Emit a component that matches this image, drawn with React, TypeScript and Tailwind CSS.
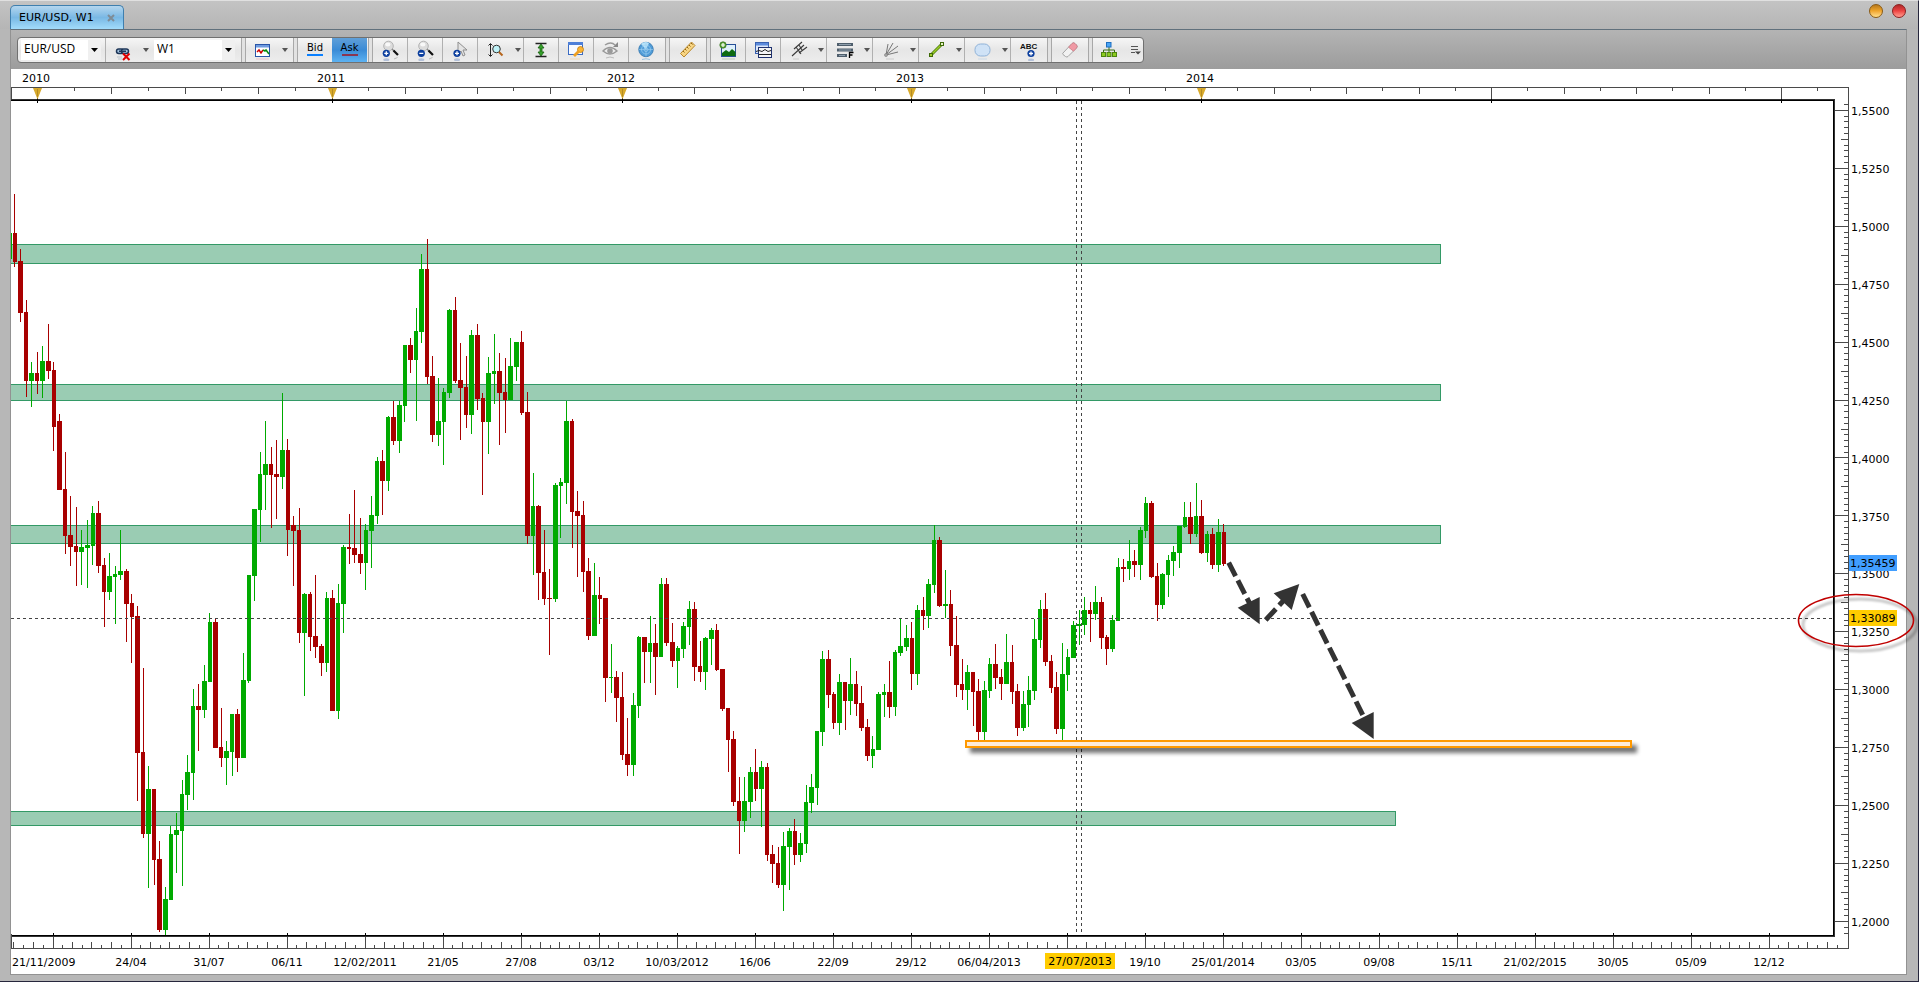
import type { ReactNode } from "react"

// one candle per week: colour, high, body top, body bottom, low
const candleRows = `
r 194 233 262 267,r 249 261 313 322,r 300 312 381 397,g 362 373 381 407,r 352 373 381 394,g 346 361 381 398,r 324 361 371 379,
r 362 370 427 451,r 414 421 490 490,r 452 489 536 554,r 496 535 547 566,r 507 546 552 586,g 530 547 552 585,g 520 545 548 588,
g 506 513 546 565,r 501 513 566 573,r 558 565 592 627,g 553 576 592 600,g 566 574 577 624,g 530 571 575 580,r 569 571 604 642,
r 594 603 617 663,r 606 616 753 801,r 668 752 834 838,g 766 789 834 888,r 789 789 860 885,r 841 859 930 932,g 887 899 930 935,
g 826 834 900 900,g 813 830 835 873,g 780 794 831 886,g 755 772 795 810,g 689 706 773 800,r 684 706 710 751,g 665 681 710 718,
g 613 622 682 682,r 619 622 748 748,r 708 747 758 767,g 741 751 758 785,g 714 714 752 776,r 709 714 758 772,g 653 680 758 758,
g 575 575 681 683,g 509 509 576 601,g 452 474 510 542,g 421 464 475 510,r 447 464 475 528,r 440 474 477 519,g 393 450 477 489,
r 439 450 530 556,r 516 525 531 586,r 508 530 633 643,g 593 594 633 696,r 592 594 637 651,r 575 636 647 658,r 644 646 663 676,
g 592 598 663 672,r 590 598 711 711,g 584 603 711 719,g 545 547 604 633,r 514 547 549 564,r 490 548 555 563,r 518 554 563 574,
g 524 530 563 590,g 496 515 531 568,g 457 461 516 524,r 450 461 481 515,g 416 417 481 491,r 401 417 441 445,g 401 405 441 453,
g 345 345 406 422,r 338 345 360 373,g 308 331 360 421,g 254 269 332 343,r 239 269 377 384,r 356 376 435 442,g 378 421 435 446,
g 388 392 422 465,g 309 310 393 398,r 297 310 381 383,r 343 380 388 440,r 356 387 415 428,g 330 335 415 434,r 324 335 399 410,
r 393 398 422 495,g 357 373 422 454,g 334 371 374 404,r 353 371 393 445,r 358 392 400 433,g 338 366 400 400,g 342 342 367 381,
r 331 342 413 415,r 392 412 536 544,g 473 506 536 575,r 505 506 573 600,r 530 572 599 605,r 569 598 599 655,g 483 485 599 602,
g 478 482 486 538,g 401 421 483 504,r 419 421 512 548,r 491 511 516 577,r 501 515 572 592,r 558 571 636 640,g 563 595 636 636,
r 577 595 599 624,r 598 598 678 702,g 644 677 678 693,r 671 677 698 722,r 672 697 755 760,r 718 754 765 776,g 693 705 765 776,
g 636 637 706 718,r 637 637 652 683,g 616 643 652 683,r 624 643 657 695,g 578 584 657 657,r 578 584 643 646,r 623 642 661 667,
g 646 648 661 688,g 622 626 649 658,g 601 609 627 645,r 602 609 667 681,r 641 666 672 682,g 637 638 672 690,g 628 630 639 665,
r 624 630 670 671,r 669 669 709 711,r 708 708 740 772,r 731 739 802 806,r 777 801 821 854,g 777 801 821 832,g 767 772 802 818,
r 749 772 789 801,g 761 767 789 827,r 763 767 855 861,r 845 854 864 883,r 847 863 885 888,g 832 846 885 911,g 828 831 847 890,
r 819 831 855 865,g 833 843 855 862,g 785 802 844 853,g 774 787 803 813,g 731 731 788 805,g 651 659 732 746,r 650 659 695 708,
r 692 694 723 729,g 674 682 723 735,r 682 682 701 730,g 658 684 701 715,r 671 684 704 716,r 686 703 728 731,r 719 727 756 761,
g 736 749 756 768,g 692 694 750 750,g 684 692 695 717,r 661 692 707 718,g 650 652 707 716,g 619 646 653 656,g 625 638 647 651,
r 622 638 674 690,g 605 610 674 685,r 597 610 616 630,g 579 584 616 628,g 525 540 585 593,r 537 540 606 607,g 570 604 606 618,
r 590 604 646 656,r 616 645 685 697,r 659 684 690 700,g 665 672 690 710,r 672 672 692 726,r 679 691 732 740,g 681 690 732 740,
g 658 664 691 698,r 644 664 678 689,r 669 677 684 700,g 634 662 684 684,r 645 662 692 704,r 684 691 728 736,g 691 704 728 731,
g 676 690 705 727,g 619 639 691 700,g 600 609 640 648,r 593 609 662 666,r 655 661 688 693,r 672 687 729 734,g 643 674 729 740,
g 649 657 675 691,g 621 625 658 658,g 610 624 626 645,g 597 610 625 635,r 602 610 614 642,g 586 602 614 620,r 597 602 638 649,
r 635 637 649 665,g 615 620 649 652,g 558 567 621 621,r 559 567 569 582,g 540 561 569 580,r 550 561 565 577,g 527 530 565 580,
g 497 503 531 538,r 501 503 577 578,r 563 576 605 621,g 573 574 605 609,g 555 560 575 597,g 546 552 561 576,g 526 526 553 568,
g 502 517 527 528,r 502 517 534 544,g 483 516 534 537,r 500 516 553 554,g 531 534 553 562,r 528 534 565 569,g 519 532 565 572,
r 524 532 564 566`

const candles = candleRows.trim().split(/,\s*/).map((row) => {
    const [color, ...y] = row.split(" ")
    return { fill: color === "g" ? "#00aa00" : "#a80000", y: y.map(Number) }
})

const weekStep = 78 / 14
const bodyLeft = (i: number) => Math.floor(13.01 + i * weekStep)

const zones = [
    { y: 244, h: 20, right: 1441 },
    { y: 384, h: 17, right: 1441 },
    { y: 525, h: 19, right: 1441 },
    { y: 811, h: 15, right: 1396 },
]

const years = [
    { x: 37, label: "2010" },
    { x: 332, label: "2011" },
    { x: 622, label: "2012" },
    { x: 911, label: "2013" },
    { x: 1201, label: "2014" },
    { x: 1491, label: "" },
    { x: 1781, label: "" },
]

const dates = ["", "24/04", "31/07", "06/11", "12/02/2011", "21/05", "27/08", "03/12", "10/03/2012", "16/06", "22/09", "29/12",
    "06/04/2013", "", "19/10", "25/01/2014", "03/05", "09/08", "15/11", "21/02/2015", "30/05", "05/09", "12/12"]

function Candles() {
    return (
        <g>
            <rect x={11} y={233} width={1} height={26} fill="#00aa00" />
            {candles.map(({ fill, y }, i) => (
                <g key={i} fill={fill}>
                    <rect x={Math.floor(14.9 + i * weekStep)} y={y[0]} width={1} height={y[3] - y[0]} />
                    <rect x={bodyLeft(i)} y={y[1]} width={bodyLeft(i + 1) - bodyLeft(i) - 1} height={y[2] - y[1]} />
                </g>
            ))}
        </g>
    )
}

function YearAxis() {
    const ticks: ReactNode[] = []
    years.forEach(({ x }, i) => {
        const next = years[i + 1] ? years[i + 1].x : x + 290
        for (let k = 1; k < 8; k++) {
            const tx = Math.round(x + ((next - x) * k) / 8)
            if (tx < 1848) ticks.push(<rect key={tx} x={tx} y={88} width={1} height={k % 2 ? 3 : 6} />)
        }
    })
    return (
        <g fill="#4a4a4a">
            <rect x={11} y={87} width={1838} height={1} />
            <rect x={11} y={87} width={1} height={12} />
            {ticks}
            {years.map(({ x, label }) => (
                <g key={x}>
                    <rect x={x} y={88} width={1} height={11} fill={label ? "#8d6f20" : "#4a4a4a"} />
                    {label && <path d={`M${x - 4} 88h9l-4 10h-1z`} fill="#d8aa2c" shapeRendering="auto" />}
                    {label && <rect x={x} y={89} width={1} height={8} fill="#b58c22" />}
                    <rect x={x} y={99} width={1} height={4} fill="#000" />
                    <text x={x - 1} y={82} textAnchor="middle" fill="#000">{label}</text>
                </g>
            ))}
        </g>
    )
}

function DateAxis() {
    const ticks: ReactNode[] = []
    for (let k = -4; k < 184; k++) {
        const x = Math.floor(52.9 + 9.75 * k)
        const h = k % 2 ? 3 : 6
        if (k % 8 && x < 1840) ticks.push(<rect key={k} x={x} y={948 - h} width={1} height={h} />)
    }
    return (
        <g fill="#4a4a4a">
            <rect x={11} y={948} width={1838} height={1} />
            <rect x={11} y={934} width={1} height={14} />
            {ticks}
            {dates.map((label, i) => (
                <g key={i}>
                    <rect x={53 + 78 * i} y={937} width={1} height={11} />
                    <rect x={53 + 78 * i} y={933} width={1} height={3} fill="#000" />
                    <text x={53 + 78 * i} y={966} textAnchor="middle" fill="#000">{label}</text>
                </g>
            ))}
            <text x={12} y={966} fill="#000">21/11/2009</text>
            <rect x={1045} y={953} width={70} height={16} fill="#ffcc00" />
            <text x={1080} y={965} textAnchor="middle" fill="#000">27/07/2013</text>
        </g>
    )
}

function PriceAxis() {
    const ticks: ReactNode[] = []
    for (let k = -1; k <= 142; k++) {
        const y = Math.floor(110.4 + 5.793 * k)
        const w = k % 10 === 0 ? 13 : k % 5 === 0 ? 7 : 4
        ticks.push(<rect key={k} x={1848 - w} y={y} width={w} height={1} />)
    }
    return (
        <g fill="#4a4a4a">
            <rect x={1848} y={87} width={1} height={862} />
            {ticks}
            {Array.from({ length: 15 }, (_, i) => (
                <text key={i} x={1851} y={Math.round(115 + 57.93 * i)} fill="#000">
                    {(1.55 - i * 0.025).toFixed(4).replace(".", ",")}
                </text>
            ))}
            <rect x={1849} y={555} width={48} height={16} fill="#419eff" />
            <text x={1850} y={567} fill="#000">1,35459</text>
            <rect x={1849} y={610} width={48} height={16} fill="#ffcc00" />
            <text x={1850} y={622} fill="#000">1,33089</text>
        </g>
    )
}

function Forecast() {
    return (
        <g shapeRendering="auto">
            <g stroke="#333" strokeWidth={5} strokeDasharray="15 5">
                <path d="M1228.7 562.7L1250 604M1265.7 620L1285 599M1302.7 594L1363 715.5" fill="none" />
            </g>
            <g fill="#333">
                <path d="M1259.7 624.3V597L1237.7 607.7z" />
                <path d="M1299.3 584L1273.7 593.3L1291.7 610z" />
                <path d="M1373.7 739V712L1351.7 723z" />
            </g>
        </g>
    )
}

function Chart() {
    return (
        <svg
            viewBox="11 69 1895 905"
            className="relative block w-full h-auto overflow-visible bg-white text-[11px] font-['DejaVu_Sans',Verdana,sans-serif]"
            shapeRendering="crispEdges"
            role="img"
            aria-label="EUR/USD weekly chart"
        >
            <defs>
                <filter id="soft" x="-5%" y="-150%" width="110%" height="500%">
                    <feGaussianBlur stdDeviation="2" />
                </filter>
                <filter id="ring" x="-10%" y="-20%" width="120%" height="140%">
                    <feGaussianBlur stdDeviation="1.2" />
                </filter>
            </defs>
            {zones.map((z) => (
                <g key={z.y}>
                    <rect x={11} y={z.y} width={z.right - 11} height={z.h} fill="#339966" />
                    <rect x={11} y={z.y + 1} width={z.right - 12} height={z.h - 2} fill="#9accb3" />
                </g>
            ))}
            <Candles />
            <g stroke="#444" strokeDasharray="3 3">
                <path d="M11 618.5H1833M1076.5 101V935M1081.5 101V935" />
            </g>
            <rect x={970} y={745} width={667} height={8} fill="#000" opacity={0.55} filter="url(#soft)" />
            <rect x={965} y={740} width={667} height={8} fill="#ff9900" />
            <rect x={967} y={742} width={663} height={4} fill="#fdebd9" />
            <Forecast />
            <path d="M11 99.5H1835M11 936.5H1835M1834.5 99V937" stroke="#333" fill="none" />
            <path d="M11 100.5H1834M11 935.5H1834M1833.5 100V936" stroke="#000" fill="none" />
            <YearAxis />
            <DateAxis />
            <PriceAxis />
            <g fill="none" shapeRendering="auto">
                <ellipse cx={1860} cy={625} rx={57} ry={26} stroke="#000" strokeWidth={3} opacity={0.22} filter="url(#ring)" />
                <ellipse cx={1856} cy={620.5} rx={57.5} ry={26} stroke="#c00000" strokeWidth={1.6} />
            </g>
        </svg>
    )
}

function Icon({ children }: { children: ReactNode }) {
    return <svg viewBox="0 0 20 23" className="w-5 h-[23px] shrink-0" fill="none" aria-hidden="true">{children}</svg>
}

function Badge({ x, y, minus }: { x: number; y: number; minus?: boolean }) {
    return (
        <g>
            <ellipse cx={x} cy={y + 6.5} rx={3} ry={1.5} fill="#0c3f9e" opacity={0.25} />
            <circle cx={x} cy={y} r={3.6} fill="#0c3f9e" />
            <path d={minus ? `M${x - 2} ${y}h4` : `M${x - 2} ${y}h4M${x} ${y - 2}v4`} stroke="#fff" strokeWidth={1.3} />
        </g>
    )
}

function Magnifier({ minus }: { minus?: boolean }) {
    return (
        <Icon>
            <circle cx={8.5} cy={8} r={4.8} fill="#dcdcdc" stroke="#b4b4b4" />
            <ellipse cx={7.8} cy={6.4} rx={2.6} ry={2} fill="#f8f8f8" />
            <path d="M12 11l2 2" stroke="#888" strokeWidth={1.4} />
            <path d="M13.5 12.5l4.5 4.5" stroke="#111" strokeWidth={2.2} />
            <path d="M14 21l3.5-1.5" stroke="#999" opacity={0.6} />
            <Badge x={6.3} y={15.3} minus={minus} />
        </Icon>
    )
}

function DropArrow() {
    return (
        <svg viewBox="0 0 6 4" className="w-[6px] h-1 shrink-0" aria-hidden="true">
            <path d="M0 0h6L3 4z" fill="#555" />
        </svg>
    )
}

function ToolButton({ label, wide, last, children }: { label: string; wide?: boolean; last?: boolean; children: ReactNode }) {
    const width = wide ? "w-[46px] gap-2 pl-[6px]" : last ? "w-9" : "w-[35px]"
    return (
        <button
            type="button"
            aria-label={label}
            className={`${width} ${last ? "" : "border-r border-[#b0b0b0]"} h-full shrink-0 flex items-center justify-center`}
        >
            {children}
            {wide && <DropArrow />}
        </button>
    )
}

function Divider() {
    return <div className="w-[5px] h-full shrink-0 border-x border-[#a8a8a8] bg-[#e2e2e2]" />
}

function Combo({ label, value, width }: { label: string; value: string; width: string }) {
    return (
        <div className={`${width} relative h-5 shrink-0 bg-white flex items-center`}>
            <select
                aria-label={label}
                defaultValue={value}
                className="appearance-none w-full h-5 pl-[3px] pb-[2px] bg-transparent text-xs leading-4 text-black font-['Open_Sans',Tahoma,sans-serif] outline-none"
            >
                <option>{value}</option>
            </select>
            <span className="absolute right-0 top-0 h-5 w-[13px] bg-[#f0f0f0] flex items-center justify-center pointer-events-none">
                <svg viewBox="0 0 7 4" className="w-[7px] h-1" aria-hidden="true"><path d="M0 0h7L3.5 4z" fill="#000" /></svg>
            </span>
        </div>
    )
}

function Toolbar() {
    return (
        <div className="h-[39px] px-[6px] flex items-center bg-linear-to-b from-[#b4b4b4] to-[#9c9c9c]">
            <div className="h-[26px] flex items-center rounded-[4px] border border-[#707070] bg-linear-to-b from-[#f6f6f6] via-[#e6e6e6] to-[#ededed] overflow-hidden">
                <div className="h-full w-[88px] shrink-0 pl-[3px] border-r border-[#b0b0b0] flex items-center">
                    <Combo label="Instrument" value="EUR/USD" width="w-[80px]" />
                </div>
                <button type="button" aria-label="Unlink" className="w-12 h-full shrink-0 flex items-center gap-[10px] pl-[7px]">
                    <Icon>
                        <g stroke="#1d3557" strokeWidth={1.5}>
                            <rect x={3.5} y={11} width={7} height={4.5} rx={2.2} fill="#9fc0dd" />
                            <rect x={8.5} y={11} width={7} height={4.5} rx={2.2} fill="#9fc0dd" />
                            <path d="M6 13.3h7" />
                        </g>
                        <path d="M4 19h5M5 21h4" stroke="#8fa0b0" opacity={0.5} />
                        <path d="M10 15.500l6.500 6.500M16.500 15.500l-6.500 6.500" stroke="#e00000" strokeWidth={2} />
                    </Icon>
                    <DropArrow />
                </button>
                <div className="h-full w-[87px] shrink-0 flex items-center">
                    <Combo label="Period" value="W1" width="w-[81px]" />
                </div>
                <Divider />
                <button type="button" aria-label="Chart type" className="w-[47px] h-full shrink-0 flex items-center gap-[10px] pl-[6px]">
                    <Icon>
                        <rect x={3.5} y={6.5} width={14} height={12} fill="#fff" stroke="#2a56a8" />
                        <rect x={4} y={7} width={13} height={2.5} fill="#6f9be0" />
                        <path d="M5 14l2-2 2 3 2-3" stroke="#d00000" strokeWidth={1.5} />
                        <path d="M11 12l2 1 1-1 3 4" stroke="#0a8a0a" strokeWidth={1.5} />
                        <path d="M4 21h13" stroke="#e9a9b5" opacity={0.6} />
                    </Icon>
                    <DropArrow />
                </button>
                <Divider />
                <button type="button" className="w-[34px] h-full shrink-0 flex flex-col items-center pt-[3px] text-[10px] leading-[13px] text-black font-['DejaVu_Sans',Verdana,sans-serif]">
                    Bid
                    <span className="w-4 h-[2px] bg-[#0a80ff]" />
                </button>
                <button type="button" aria-pressed="true" className="w-[35px] mr-px h-full shrink-0 flex flex-col items-center pt-[3px] text-[10px] leading-[13px] text-black font-['DejaVu_Sans',Verdana,sans-serif] bg-linear-to-b from-[#5f9fd8] via-[#3a8bd6] to-[#5cb2f2]">
                    Ask
                    <span className="w-4 h-[2px] bg-[#8a3550]" />
                </button>
                <Divider />
                <ToolButton label="Zoom in"><Magnifier /></ToolButton>
                <ToolButton label="Zoom out"><Magnifier minus /></ToolButton>
                <ToolButton label="Cursor">
                    <Icon>
                        <path d="M8 4v12l3-3 2 5 2-1-2-5h4z" fill="#e4e4e4" stroke="#8e8e8e" />
                        <Badge x={7} y={15.3} />
                    </Icon>
                </ToolButton>
                <ToolButton label="Vertical zoom" wide>
                    <Icon>
                        <path d="M3.5 6v12M1.5 7.5l2-2 2 2M1.5 16.5l2 2 2-2" stroke="#222" />
                        <circle cx={9.5} cy={11} r={3.8} fill="#bff2f7" stroke="#333" />
                        <path d="M12 14l3.5 3.5" stroke="#b5651d" strokeWidth={2} />
                    </Icon>
                </ToolButton>
                <ToolButton label="Fit height">
                    <Icon>
                        <path d="M4.500 5.500h11M4.500 18.500h11" stroke="#222" strokeWidth={1.3} />
                        <path d="M10 6l3 4h-2v4h2l-3 4-3-4h2v-4H7z" fill="#35a02a" stroke="#14610e" strokeWidth={0.8} />
                    </Icon>
                </ToolButton>
                <ToolButton label="Template">
                    <Icon>
                        <rect x={2.5} y={4.5} width={14} height={12} fill="#f7faff" stroke="#3a6bc4" />
                        <rect x={2} y={4} width={15} height={3} fill="#4d7fd8" />
                        <circle cx={14.5} cy={11.5} r={3} fill="#fbb533" stroke="#c07a10" strokeWidth={0.8} />
                        <path d="M13 13l-5 5" stroke="#f0a020" strokeWidth={2.8} />
                        <path d="M4 21h10" stroke="#f0c890" opacity={0.6} />
                    </Icon>
                </ToolButton>
                <ToolButton label="Visibility">
                    <Icon>
                        <path d="M2 13q7-7 14 0q-7 6-14 0z" stroke="#999" strokeWidth={1.4} fill="#ededed" />
                        <circle cx={9} cy={13} r={2.8} fill="#999" />
                        <path d="M4 7q6-4 10 0" stroke="#999" strokeWidth={1.5} />
                        <path d="M17 4v5h-5z" fill="#888" />
                        <path d="M5 20q4-2 8 0" stroke="#bbb" />
                    </Icon>
                </ToolButton>
                <ToolButton label="Scanner" last>
                    <Icon>
                        <circle cx={9} cy={11.5} r={7.2} fill="#4f9cd8" stroke="#3d7fb6" />
                        <path d="M9 11.5L4 6a7 7 0 0 1 8-1z" fill="#b5e2fa" />
                        <circle cx={9} cy={11.5} r={4.5} stroke="#9fd0f0" strokeWidth={0.7} />
                        <circle cx={9} cy={11.5} r={2} stroke="#9fd0f0" strokeWidth={0.7} />
                        <path d="M2 11.5h14M9 4.5v14" stroke="#9fd0f0" strokeWidth={0.6} />
                        <path d="M5 21.5q4-1.5 8 0" stroke="#9cc3e0" />
                    </Icon>
                </ToolButton>
                <Divider />
                <ToolButton label="Ruler" last>
                    <Icon>
                        <path d="M2.500 15.500L13.500 4l3.500 3.500L6 19z" fill="#f8d583" stroke="#b8862a" />
                        <path d="M5 13l1.500 1.500M7 11l1.500 1.500M9 9l1.500 1.500M11 7l1.500 1.500M13 5l1.500 1.500" stroke="#8e6518" />
                    </Icon>
                </ToolButton>
                <Divider />
                <ToolButton label="Add picture">
                    <Icon>
                        <rect x={3.5} y={6.5} width={14} height={12} fill="#dff0fb" stroke="#274f96" />
                        <path d="M4 18v-3l4-3 3 2 3-3 3.5 3V18z" fill="#0d6b12" />
                        <circle cx={5} cy={7} r={3.2} fill="#5ca53a" stroke="#2f6d17" strokeWidth={0.7} />
                        <path d="M3 7h4M5 5v4" stroke="#fff" strokeWidth={1.2} />
                        <path d="M4 21h13" stroke="#9cb89c" opacity={0.6} />
                    </Icon>
                </ToolButton>
                <ToolButton label="Indicators">
                    <Icon>
                        <rect x={2.5} y={4.5} width={13} height={11} fill="#dbe7fa" stroke="#3a62b0" />
                        <rect x={3} y={5} width={12} height={2.5} fill="#5c8bdc" />
                        <rect x={5.5} y={9.5} width={13} height={10} fill="#f5f5f5" stroke="#1f3270" />
                        <path d="M3 13.5l3-1 3 1 3-2 3 2 3-1M6 16.5h12" stroke="#222" />
                    </Icon>
                </ToolButton>
                <ToolButton label="Pitchfork" wide>
                    <Icon>
                        <path d="M2 18L14 7M6 9l5 7M4 11l8-7M9 15l8-6M9 7l3 5" stroke="#3a3a3a" strokeWidth={1.1} />
                        <path d="M3 21h6" stroke="#ccc" />
                    </Icon>
                </ToolButton>
                <ToolButton label="Fibonacci" wide>
                    <Icon>
                        <path d="M1 6.5h16M1 12h16M1 17.5h10" stroke="#4e5e6c" strokeWidth={3.2} />
                        <path d="M3 6.5h12M3 12h12M3 17.5h6" stroke="#8e9eac" />
                        <path d="M13.5 20v-5.500h4M13.500 17h3" stroke="#000" strokeWidth={1.3} />
                    </Icon>
                </ToolButton>
                <ToolButton label="Fan" wide>
                    <Icon>
                        <path d="M4 17L6 6M4 17L11 5M4 17L16 8M4 17L16 14" stroke="#777" />
                        <circle cx={4} cy={17} r={1.5} fill="#aaa" stroke="#777" strokeWidth={0.6} />
                        <path d="M4 21h8" stroke="#ccc" />
                    </Icon>
                </ToolButton>
                <ToolButton label="Line" wide>
                    <Icon>
                        <path d="M3 17L14 6" stroke="#4d7d0a" strokeWidth={3} />
                        <path d="M3 17L14 6" stroke="#9ccc28" strokeWidth={1.4} />
                        <rect x={1.5} y={15.5} width={3} height={3} fill="#9ccc28" stroke="#3f6a08" />
                        <rect x={12.5} y={4.5} width={3} height={3} fill="#e8f5c8" stroke="#3f6a08" />
                    </Icon>
                </ToolButton>
                <ToolButton label="Ellipse" wide>
                    <Icon>
                        <rect x={1} y={6} width={15} height={12} rx={5.5} fill="#cfe2f6" stroke="#8fb2d8" />
                        <path d="M4 21h9" stroke="#c9d8e6" />
                    </Icon>
                </ToolButton>
                <ToolButton label="Text label" last>
                    <Icon>
                        <text x={1} y={11} fontSize={8} fontWeight={700} fill="#111" className="font-['Liberation_Sans',sans-serif]">ABC</text>
                        <Badge x={12} y={15.5} />
                    </Icon>
                </ToolButton>
                <Divider />
                <ToolButton label="Eraser" last>
                    <Icon>
                        <path d="M3 15L12 5.500q1.500-1.500 3 0l1.500 1.500q1.500 1.500 0 3L8 18.500q-1 1-2.500 0L3 16.500q-.8-.7 0-1.500z" fill="#f2f2f2" stroke="#a5a5a5" />
                        <path d="M8.500 9.200L12 5.500q1.500-1.500 3 0l1.500 1.500q1.500 1.500 0 3l-3 3.200z" fill="#f09aa5" stroke="#c97580" strokeWidth={0.7} />
                    </Icon>
                </ToolButton>
                <Divider />
                <button type="button" aria-label="Objects and options" className="w-[50px] h-full shrink-0 flex items-center gap-3 pl-[6px]">
                    <Icon>
                        <path d="M10 9v6M4.500 15v-3h11v3" stroke="#3c6e1a" />
                        <rect x={7.5} y={4.5} width={4.5} height={4.5} fill="#4ba5f5" stroke="#1e6ec0" />
                        <rect x={2.5} y={14.5} width={4} height={4} fill="#8ccc1e" stroke="#4d8410" />
                        <rect x={8} y={14.5} width={4} height={4} fill="#8ccc1e" stroke="#4d8410" />
                        <rect x={13.5} y={14.5} width={4} height={4} fill="#8ccc1e" stroke="#4d8410" />
                    </Icon>
                    <svg viewBox="0 0 10 10" className="w-[10px] h-[10px] shrink-0" aria-hidden="true">
                        <path d="M0 1.500h7M0 4.500h7M0 7.500h4" stroke="#555" />
                        <path d="M4 6.500h6l-3 3z" fill="#444" />
                    </svg>
                </button>
            </div>
        </div>
    )
}

export default function App() {
    return (
        <div className="w-full bg-[#b7b7b7] border-t border-t-[#e0e0e0] border-r border-r-[#26263c] border-b border-b-[#26263c] pb-[6px]">
            <div className="h-7 pl-[10px] pr-3 flex items-end justify-between bg-linear-to-b from-[#c3c3c3] to-[#b5b5b5]">
                <div className="w-[114px] h-6 pl-2 pr-2 flex items-center justify-between border border-b-0 border-[#3f7fae] rounded-t-[5px] bg-linear-to-b from-[#b4d6ee] via-[#79b8e4] to-[#a2dcfb] text-[11px] leading-4 text-black font-['DejaVu_Sans',Verdana,sans-serif]">
                    <span className="whitespace-nowrap">EUR/USD, W1</span>
                    <button type="button" aria-label="Close tab">
                        <svg viewBox="0 0 8 8" className="w-2 h-2"><path d="M1 1l6 6M7 1l-6 6" stroke="#7f8c96" strokeWidth={2} /></svg>
                    </button>
                </div>
                <div className="self-start pt-[3px] flex gap-[9px]">
                    <button type="button" aria-label="Detach" className="w-[14px] h-[14px] rounded-full border border-[#8a5a14] bg-linear-to-b from-[#b87a1c] via-[#f0a62c] to-[#ffe08a]" />
                    <button type="button" aria-label="Close" className="w-[14px] h-[14px] rounded-full border border-[#8a1f1f] bg-linear-to-b from-[#b02a2a] via-[#ee4444] to-[#ff9a90]" />
                </div>
            </div>
            <div className="ml-[10px] mr-[11px] border border-[#929292] border-t-[#60707c]">
                <Toolbar />
                <Chart />
            </div>
        </div>
    )
}
